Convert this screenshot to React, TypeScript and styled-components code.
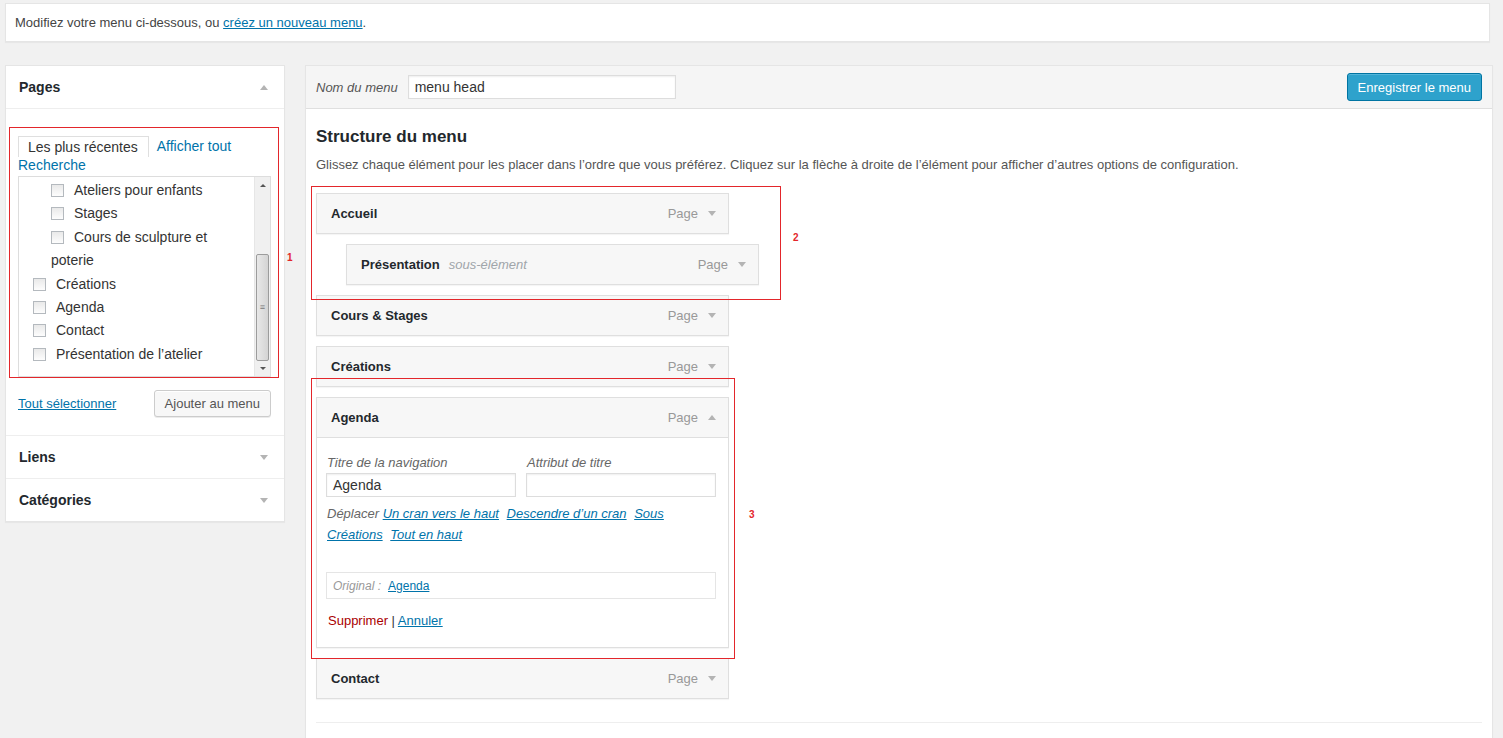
import React from 'react'
import styled, { createGlobalStyle } from 'styled-components'

const GlobalStyle = createGlobalStyle`
    html, body {
        margin: 0;
        padding: 0;
        background: #f1f1f1;
    }
    body {
        font-family: 'Liberation Sans', Arial, sans-serif;
        font-size: 13px;
        color: #444;
    }
    * {
        box-sizing: border-box;
    }
`

const Page = styled.div`
    position: relative;
    width: 1503px;
    height: 738px;
    overflow: hidden;
    padding: 3px 10px 0 5px;
`
const Notice = styled.div`
    display: flex;
    align-items: center;
    height: 39px;
    margin-right: 3px;
    padding: 0 9px;
    background: #fff;
    border: 1px solid #e5e5e5;
    box-shadow: 0 1px 1px rgba(0, 0, 0, 0.04);
    color: #444;
`
const Link = styled.a<{ $size?: number }>`
    color: #0073aa;
    text-decoration: underline;
    font-size: ${(p) => (p.$size ? `${p.$size}px` : 'inherit')};
    cursor: pointer;
`
const Columns = styled.div`
    display: flex;
    gap: 20px;
    margin-top: 23px;
    align-items: flex-start;
`

/* ---------- left column ---------- */
const Sidebar = styled.div`
    width: 280px;
    flex: none;
    background: #fff;
    border: 1px solid #e5e5e5;
    box-shadow: 0 1px 1px rgba(0, 0, 0, 0.04);
`
const SectionHeader = styled.div<{ $top?: boolean }>`
    display: flex;
    align-items: center;
    justify-content: space-between;
    height: ${(p) => (p.$top ? 43 : 42)}px;
    padding: 0 16px 0 13px;
    font-size: 14px;
    font-weight: 700;
    color: #23282d;
    border-top: ${(p) => (p.$top ? '1px solid #eee' : 'none')};
`
const Arrow = styled.span<{ $up?: boolean }>`
    display: inline-block;
    width: 0;
    height: 0;
    border-left: 4px solid transparent;
    border-right: 4px solid transparent;
    ${(p) =>
        p.$up
            ? 'border-bottom: 5px solid #b4b4b4;'
            : 'border-top: 5px solid #b4b4b4;'}
`
const PagesBody = styled.div`
    padding: 27px 13px 18px 12px;
    border-top: 1px solid #eee;
`
const TabList = styled.div`
    display: flex;
    flex-wrap: wrap;
    align-items: center;
    font-size: 14px;
`
const ActiveTab = styled.span`
    line-height: 19px;
    padding: 1px 10px 0 9px;
    border: 1px solid #dfdfdf;
    border-bottom: none;
    color: #333;
`
const TabLink = styled.span<{ $gap?: number }>`
    line-height: 17px;
    margin-left: ${(p) => p.$gap || 0}px;
    color: #0073aa;
`
const ListBox = styled.div`
    display: flex;
    height: 201px;
    margin-top: 2px;
    border: 1px solid #ddd;
    background: #fff;
`
const ListContent = styled.ul`
    flex: 1;
    margin: 0;
    padding: 2px 14px 0 14px;
    list-style: none;
    overflow: hidden;
    font-size: 14px;
    color: #333;
`
const ListItem = styled.li<{ $child?: boolean }>`
    line-height: 23.4px;
    padding-left: ${(p) => (p.$child ? 18 : 0)}px;
`
const Check = styled.span`
    display: inline-block;
    width: 13px;
    height: 13px;
    margin-right: 10px;
    vertical-align: -2px;
    border: 1px solid #b4b9be;
    background: linear-gradient(#e9e9e9, #fdfdfd);
`
const Scrollbar = styled.div`
    display: flex;
    flex-direction: column;
    width: 16px;
    flex: none;
    background: #f0f0f0;
    border-left: 1px solid #e6e6e6;
`
const ScrollArrow = styled.div<{ $h: number }>`
    display: flex;
    align-items: center;
    justify-content: center;
    height: ${(p) => p.$h}px;
`
const SmallTri = styled.span<{ $up?: boolean }>`
    width: 0;
    height: 0;
    border-left: 3px solid transparent;
    border-right: 3px solid transparent;
    ${(p) =>
        p.$up ? 'border-bottom: 3px solid #555;' : 'border-top: 3px solid #555;'}
`
const Track = styled.div`
    height: 60px;
`
const Thumb = styled.div`
    display: flex;
    align-items: center;
    justify-content: center;
    height: 107px;
    margin: 0 1px;
    border: 1px solid #9c9c9c;
    border-radius: 2px;
    background: linear-gradient(90deg, #e8e8e8, #d4d4d4);
    color: #777;
    font-size: 9px;
    line-height: 1;
`
const ListActions = styled.div`
    display: flex;
    align-items: center;
    justify-content: space-between;
    margin-top: 13px;
`
const SecondaryButton = styled.button`
    height: 27px;
    padding: 0 10px;
    border: 1px solid #ccc;
    border-radius: 3px;
    background: #f7f7f7;
    box-shadow: inset 0 1px 0 #fff, 0 1px 0 rgba(0, 0, 0, 0.08);
    color: #555;
    font-family: inherit;
    font-size: 13px;
`

/* ---------- right column ---------- */
const Editor = styled.div`
    flex: 1;
    height: 700px;
    background: #fff;
    border: 1px solid #e5e5e5;
    box-shadow: 0 1px 1px rgba(0, 0, 0, 0.04);
`
const EditorHeader = styled.div`
    display: flex;
    align-items: center;
    height: 43px;
    padding: 0 10px;
    background: #f5f5f5;
    border-bottom: 1px solid #dfdfdf;
`
const NameLabel = styled.label`
    font-style: italic;
    color: #555;
    margin-right: 10px;
`
const TextInput = styled.div<{ $w: number }>`
    display: flex;
    align-items: center;
    width: ${(p) => p.$w}px;
    height: 24px;
    padding: 0 6px;
    background: #fff;
    border: 1px solid #ddd;
    box-shadow: inset 0 1px 2px rgba(0, 0, 0, 0.07);
    font-size: 14px;
    color: #333;
`
const PrimaryButton = styled.button`
    margin-left: auto;
    height: 28px;
    padding: 0 10px;
    border: 1px solid #0074a2;
    border-radius: 3px;
    background: #2ea2cc;
    box-shadow: inset 0 1px 0 rgba(120, 200, 230, 0.5);
    color: #fff;
    font-family: inherit;
    font-size: 13px;
`
const EditorBody = styled.div`
    padding: 18px 10px 0 10px;
`
const Title = styled.h3`
    margin: 0;
    font-size: 17px;
    line-height: 20px;
    font-weight: 700;
    color: #23282d;
`
const Description = styled.p`
    margin: 9px 0 0;
    line-height: 18px;
    color: #555;
`
const MenuList = styled.div`
    display: flex;
    flex-direction: column;
    gap: 10px;
    margin-top: 19px;
`
const MenuItem = styled.div<{ $depth?: number }>`
    width: 413px;
    margin-left: ${(p) => (p.$depth || 0) * 30}px;
    border: 1px solid #dfdfdf;
    background: #fff;
    box-shadow: 0 1px 1px rgba(0, 0, 0, 0.04);
`
const ItemBar = styled.div<{ $open?: boolean }>`
    display: flex;
    align-items: center;
    padding: 0 12px 0 14px;
    background: #f7f7f7;
    border-bottom: ${(p) => (p.$open ? '1px solid #dfdfdf' : 'none')};
    height: ${(p) => (p.$open ? 40 : 39)}px;
`
const ItemTitle = styled.span`
    font-weight: 700;
    color: #23282d;
`
const SubLabel = styled.span`
    margin-left: 9px;
    font-style: italic;
    color: #a0a5aa;
`
const ItemType = styled.span`
    margin-left: auto;
    margin-right: 10px;
    color: #999;
`
const ItemSettings = styled.div`
    padding: 17px 13px 17px 9px;
`
const FieldRow = styled.div`
    display: flex;
    gap: 10px;
`
const Field = styled.div`
    display: flex;
    flex-direction: column;
`
const FieldLabel = styled.span`
    line-height: 16px;
    margin-bottom: 2px;
    padding-left: 1px;
    font-style: italic;
    color: #666;
`
const MoveLine = styled.div`
    width: 392px;
    margin-top: 6px;
    padding-left: 1px;
    line-height: 21px;
    font-style: italic;
    color: #666;
`
const MoveLink = styled(Link)`
    margin-right: 4px;
`
const OriginalBox = styled.div`
    display: flex;
    align-items: center;
    width: 390px;
    height: 27px;
    margin-top: 27px;
    padding: 0 6px;
    border: 1px solid #e5e5e5;
    font-size: 12px;
`
const OriginalLabel = styled.span`
    margin-right: 7px;
    font-style: italic;
    color: #999;
`
const ItemActions = styled.div`
    margin-top: 13px;
    padding-left: 2px;
    line-height: 18px;
    color: #333;
`
const Danger = styled.span`
    color: #a00;
`
const Footer = styled.div`
    margin-top: 23px;
    border-top: 1px solid #eee;
    height: 20px;
`

/* ---------- annotation overlay ---------- */
const Mark = styled.div<{ $x: number; $y: number; $w: number; $h: number }>`
    position: absolute;
    left: ${(p) => p.$x}px;
    top: ${(p) => p.$y}px;
    width: ${(p) => p.$w}px;
    height: ${(p) => p.$h}px;
    border: 1.5px solid #e3262b;
    pointer-events: none;
`
const MarkNumber = styled.span<{ $x: number; $y: number }>`
    position: absolute;
    left: ${(p) => p.$x}px;
    top: ${(p) => p.$y}px;
    font-size: 10px;
    font-weight: 700;
    color: #e3262b;
`

type Item = { title: string; depth?: number; sub?: string }

const items: Item[] = [
    { title: 'Accueil' },
    { title: 'Présentation', depth: 1, sub: 'sous-élément' },
    { title: 'Cours & Stages' },
    { title: 'Créations' },
]

const pageList: { label: string; child?: boolean }[] = [
    { label: 'Ateliers pour enfants', child: true },
    { label: 'Stages', child: true },
    { label: 'Cours de sculpture et poterie', child: true },
    { label: 'Créations' },
    { label: 'Agenda' },
    { label: 'Contact' },
    { label: 'Présentation de l’atelier' },
]

const MenuBar = ({ item, open }: { item: Item; open?: boolean }) => (
    <ItemBar $open={open}>
        <ItemTitle>{item.title}</ItemTitle>
        {item.sub && <SubLabel>{item.sub}</SubLabel>}
        <ItemType>Page</ItemType>
        <Arrow $up={open} />
    </ItemBar>
)

export default function App() {
    return (
        <Page>
            <GlobalStyle />
            <Notice>
                Modifiez votre menu ci-dessous, ou&nbsp;<Link>créez un nouveau menu</Link>.
            </Notice>
            <Columns>
                <Sidebar>
                    <SectionHeader>
                        Pages
                        <Arrow $up />
                    </SectionHeader>
                    <PagesBody>
                        <TabList>
                            <ActiveTab>Les plus récentes</ActiveTab>
                            <TabLink $gap={8}>Afficher tout</TabLink>
                            <TabLink>Recherche</TabLink>
                        </TabList>
                        <ListBox>
                            <ListContent>
                                {pageList.map((p) => (
                                    <ListItem key={p.label} $child={p.child}>
                                        <Check />
                                        {p.label}
                                    </ListItem>
                                ))}
                            </ListContent>
                            <Scrollbar>
                                <ScrollArrow $h={17}>
                                    <SmallTri $up />
                                </ScrollArrow>
                                <Track />
                                <Thumb>≡</Thumb>
                                <ScrollArrow $h={15}>
                                    <SmallTri />
                                </ScrollArrow>
                            </Scrollbar>
                        </ListBox>
                        <ListActions>
                            <Link>Tout sélectionner</Link>
                            <SecondaryButton>Ajouter au menu</SecondaryButton>
                        </ListActions>
                    </PagesBody>
                    <SectionHeader $top>
                        Liens
                        <Arrow />
                    </SectionHeader>
                    <SectionHeader $top>
                        Catégories
                        <Arrow />
                    </SectionHeader>
                </Sidebar>

                <Editor>
                    <EditorHeader>
                        <NameLabel>Nom du menu</NameLabel>
                        <TextInput $w={268}>menu head</TextInput>
                        <PrimaryButton>Enregistrer le menu</PrimaryButton>
                    </EditorHeader>
                    <EditorBody>
                        <Title>Structure du menu</Title>
                        <Description>
                            Glissez chaque élément pour les placer dans l’ordre que vous
                            préférez. Cliquez sur la flèche à droite de l’élément pour
                            afficher d’autres options de configuration.
                        </Description>
                        <MenuList>
                            {items.map((it) => (
                                <MenuItem key={it.title} $depth={it.depth}>
                                    <MenuBar item={it} />
                                </MenuItem>
                            ))}
                            <MenuItem>
                                <MenuBar item={{ title: 'Agenda' }} open />
                                <ItemSettings>
                                    <FieldRow>
                                        <Field>
                                            <FieldLabel>Titre de la navigation</FieldLabel>
                                            <TextInput $w={190}>Agenda</TextInput>
                                        </Field>
                                        <Field>
                                            <FieldLabel>Attribut de titre</FieldLabel>
                                            <TextInput $w={190} />
                                        </Field>
                                    </FieldRow>
                                    <MoveLine>
                                        Déplacer <MoveLink>Un cran vers le haut</MoveLink>{' '}
                                        <MoveLink>Descendre d’un cran</MoveLink>{' '}
                                        <MoveLink>Sous</MoveLink>{' '}
                                        <MoveLink>Créations</MoveLink>{' '}
                                        <MoveLink>Tout en haut</MoveLink>
                                    </MoveLine>
                                    <OriginalBox>
                                        <OriginalLabel>Original :</OriginalLabel>
                                        <Link>Agenda</Link>
                                    </OriginalBox>
                                    <ItemActions>
                                        <Danger>Supprimer</Danger> | <Link>Annuler</Link>
                                    </ItemActions>
                                </ItemSettings>
                            </MenuItem>
                            <MenuItem>
                                <MenuBar item={{ title: 'Contact' }} />
                            </MenuItem>
                        </MenuList>
                        <Footer />
                    </EditorBody>
                </Editor>
            </Columns>

            <Mark $x={9} $y={127} $w={270} $h={251} />
            <MarkNumber $x={287} $y={252}>1</MarkNumber>
            <Mark $x={311} $y={186} $w={470} $h={114} />
            <MarkNumber $x={793} $y={232}>2</MarkNumber>
            <Mark $x={311} $y={378} $w={424} $h={281} />
            <MarkNumber $x={749} $y={509}>3</MarkNumber>
        </Page>
    )
}
